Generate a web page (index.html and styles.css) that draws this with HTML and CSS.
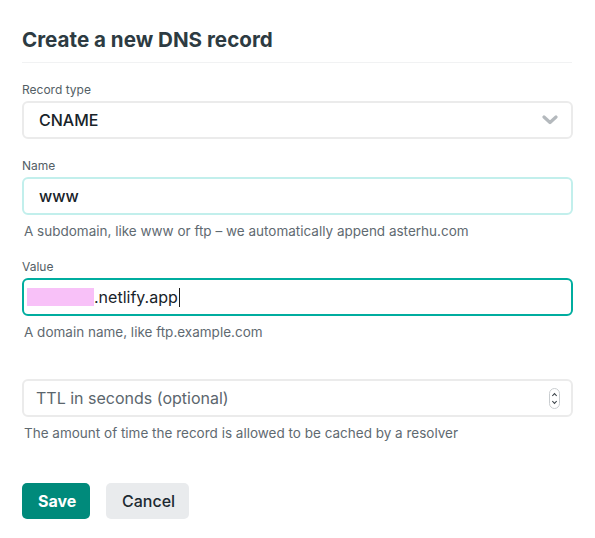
FILE: index.html
```html
<!DOCTYPE html>
<html>
<head>
<meta charset="utf-8">
<link rel="stylesheet" href="styles.css">
</head>
<body>
<div class="dialog">
  <h1 class="title">Create a new DNS record</h1>
  <div class="field">
    <div class="label">Record type</div>
    <div class="control control-gray select">
      <span class="value">CNAME</span>
      <svg class="chevron" width="16" height="10" viewBox="0 0 16 10"><path d="M2 2 L8 7.5 L14 2" fill="none" stroke="#b4b9bd" stroke-width="3.2" stroke-linecap="round" stroke-linejoin="round"/></svg>
    </div>
  </div>
  <div class="field">
    <div class="label">Name</div>
    <div class="control control-soft">
      <span class="value">www</span>
    </div>
    <div class="help">A subdomain, like www or ftp – we automatically append asterhu.com</div>
  </div>
  <div class="field">
    <div class="label">Value</div>
    <div class="control control-focus">
      <span class="redact"></span><span class="value tight">.netlify.app</span><span class="caret"></span>
    </div>
    <div class="help">A domain name, like ftp.example.com</div>
  </div>
  <div class="field">
    <div class="label">&nbsp;</div>
    <div class="control control-gray number">
      <span class="placeholder">TTL in seconds (optional)</span>
      <svg class="spin" width="11" height="21" viewBox="0 0 11 21"><rect x="0.5" y="0.5" width="10" height="20" rx="5" fill="#fff" stroke="#c9cdd0"/><path d="M3.3 8 L5.5 5.6 L7.7 8" fill="none" stroke="#3a4248" stroke-width="1.1"/><path d="M3.3 13 L5.5 15.4 L7.7 13" fill="none" stroke="#3a4248" stroke-width="1.1"/></svg>
    </div>
    <div class="help">The amount of time the record is allowed to be cached by a resolver</div>
  </div>
  <div class="actions">
    <button class="btn btn-primary">Save</button>
    <button class="btn btn-secondary">Cancel</button>
  </div>
</div>
</body>
</html>
```
FILE: styles.css
```css
* { box-sizing: border-box; }
html, body { margin: 0; padding: 0; background: #ffffff; }
body {
  font-family: Inter, "Noto Sans", "Liberation Sans", sans-serif;
  color: #2e3a41;
}
.dialog {
  width: 595px;
  padding: 28px 22px 0 22px;
}
.title {
  margin: 0;
  font-size: 20.6px;
  line-height: 24px;
  font-weight: 700;
  color: #2d3b42;
  padding-bottom: 10px;
  border-bottom: 1px solid #f1f2f3;
  width: 550px;
}
.field {
  margin-top: 19px;
  width: 551px;
}
.label {
  font-size: 12px;
  line-height: 16px;
  color: #535e65;
  margin-bottom: 3px;
}
.control {
  height: 38px;
  border-radius: 6px;
  display: flex;
  align-items: center;
  padding: 0 15px;
  font-size: 16px;
}
.control-gray { border: 2px solid #ebebeb; }
.control-soft { border: 2px solid #c2efec; }
.control-focus { border: 2px solid #00ad9f; padding-left: 3px; }
.value { color: #182329; font-weight: 500; }
.value.tight { font-weight: 400; color: #182329; }
.select { justify-content: space-between; }
.chevron { margin-right: -2px; }
.redact {
  width: 67px;
  height: 18px;
  background: #f8c1f8;
}
.caret {
  width: 1px;
  height: 19px;
  background: #1a1a1a;
  margin-left: 1px;
}
.number { justify-content: space-between; padding-left: 12px; padding-right: 11px; }
.placeholder { color: #5b666d; }
.help {
  margin-top: 7px;
  font-size: 13.5px;
  line-height: 18px;
  color: #5f6a71;
  padding-left: 2px;
}
.actions {
  display: flex;
  gap: 16px;
  margin-top: 41px;
}
.btn {
  height: 36px;
  border: none;
  border-radius: 5px;
  font-family: inherit;
  font-size: 16px;
  padding: 0 16px;
}
.btn-primary {
  background: #008a7b;
  color: #ffffff;
  font-weight: 700;
  width: 68px;
}
.btn-secondary {
  background: #e9ebed;
  color: #1d2a31;
  font-weight: 500;
  width: 83px;
}
```
